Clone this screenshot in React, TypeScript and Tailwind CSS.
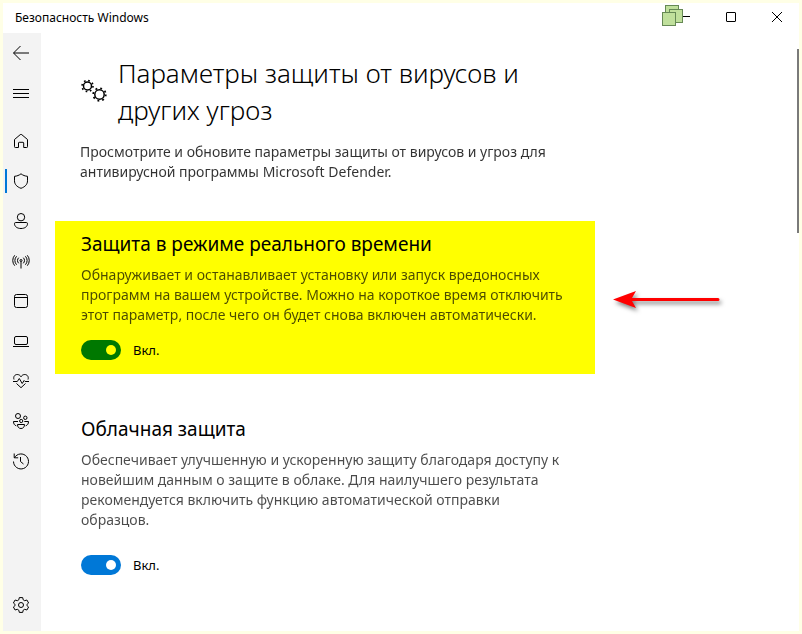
import type { ReactNode } from 'react';

const navItems = [
  {
    label: 'Главная',
    icon: <path d="M1.500 6.500 7.200 1.700a1.200 1.200 0 0 1 1.600 0l5.700 4.800v7.200a.8.8 0 0 1-.8.8h-3V10a.7.7 0 0 0-.7-.7H6.200a.7.7 0 0 0-.7.7v4.500h-3.200a.8.8 0 0 1-.8-.8z" />,
  },
  {
    label: 'Защита от вирусов и угроз',
    active: true,
    icon: <path d="M8 .8c1.900 1.500 4 2.300 6.500 2.500v4.500c0 3.500-2.300 6-6.500 7.500-4.200-1.500-6.500-4-6.500-7.500V3.300C4 3.100 6.100 2.300 8 .8z" />,
  },
  {
    label: 'Защита учетных записей',
    icon: (
      <>
        <circle cx="8" cy="4.200" r="3.700" />
        <path d="M2.700 9.500h10.600a1.200 1.200 0 0 1 1.200 1.200c0 2.800-2.600 4.800-6.500 4.800s-6.500-2-6.500-4.800a1.200 1.200 0 0 1 1.200-1.200z" />
      </>
    ),
  },
  {
    label: 'Брандмауэр и безопасность сети',
    icon: (
      <>
        <circle cx="8" cy="7.500" r="1" />
        <path d="M8 8.500v7M5.700 10.300a3.900 3.900 0 0 1 0-5.600M10.300 10.300a3.900 3.900 0 0 0 0-5.600M3.600 11.700a6 6 0 0 1 0-8.400M12.400 11.700a6 6 0 0 0 0-8.400M1.700 12.700a7.900 7.900 0 0 1 0-10.400M14.300 12.700a7.900 7.900 0 0 0 0-10.400" />
      </>
    ),
  },
  {
    label: 'Управление приложениями и браузером',
    icon: (
      <>
        <rect x="1.500" y="1.500" width="13" height="13" rx="2" />
        <path d="M1.500 4.500h13" />
      </>
    ),
  },
  {
    label: 'Безопасность устройства',
    icon: (
      <>
        <rect x="1.500" y="3.500" width="13" height="8" rx="1.500" />
        <path d="M0 13.500h16" />
      </>
    ),
  },
  {
    label: 'Производительность и работоспособность',
    icon: (
      <>
        <path d="M1 6.500C0 3.500 2 1.500 4.200 1.500c1.600 0 3 .8 3.800 2.300.8-1.500 2.200-2.300 3.800-2.300C14 1.500 16 3.500 15 6.500" />
        <path d="M0 8.500h4.300L6.300 5.500l2.900 5 1.900-3 1 1H16M3.500 10.500 8 14.700l4.500-4.200" />
      </>
    ),
  },
  {
    label: 'Параметры для семьи',
    icon: (
      <>
        <circle cx="5" cy="3" r="2.500" />
        <circle cx="12.300" cy="4.800" r="1.700" />
        <circle cx="8.200" cy="8" r="1.600" />
        <path d="M4.500 11.500h7c0 2.500-1.300 4-3.500 4s-3.500-1.500-3.500-4zM5 8.500H.5c0 2.300 1 3.800 2.800 4.300M11.300 8.500h4.200c0 2.300-1 3.800-2.800 4.300" />
      </>
    ),
  },
  {
    label: 'Журнал защиты',
    icon: <path d="M1.200.5v4.300h4M1.500 4.700A7.500 7.500 0 1 1 .5 8.500M7.500 4v4.500l3 2.500" />,
  },
];

function Icon({ children }: { children: ReactNode }) {
  return (
    <svg viewBox="0 0 16 16" className="size-4 overflow-visible" fill="none" stroke="currentColor" strokeWidth="1" strokeLinejoin="round" aria-hidden="true">
      {children}
    </svg>
  );
}

function NavButton({ label, active, children }: { label: string; active?: boolean; children: ReactNode }) {
  return (
    <button
      type="button"
      aria-label={label}
      className={`flex h-10 w-full items-center justify-center border-x-2 border-transparent pr-0.5 ${active ? 'relative' : ''}`}
    >
      {active && <span className="absolute left-0 h-6 w-0.5 bg-[#0078d7]" />}
      <Icon>{children}</Icon>
    </button>
  );
}

function TitleBar() {
  return (
    <header className="flex h-[30px] items-center justify-between pl-3 text-xs">
      <span>Безопасность Windows</span>
      <div className="relative flex h-7 gap-0.5 self-start">
        <button type="button" aria-label="Свернуть" className="flex w-11 items-center justify-center">
          <svg viewBox="0 0 10 10" className="size-2.5" stroke="currentColor" aria-hidden="true">
            <path d="M0 4.500h10" />
          </svg>
        </button>
        <button type="button" aria-label="Развернуть" className="flex w-11 items-center justify-center">
          <svg viewBox="0 0 10 10" className="size-2.5" fill="none" stroke="currentColor" aria-hidden="true">
            <rect x="0.500" y="0.500" width="9" height="9" rx="0.500" />
          </svg>
        </button>
        <button type="button" aria-label="Закрыть" className="flex w-11 items-center justify-center">
          <svg viewBox="0 0 10 10" className="size-2.5" stroke="currentColor" aria-hidden="true">
            <path d="m0 0 10 10M10 0 0 10" />
          </svg>
        </button>
        {/* Stacked windows badge over the minimize button */}
        <svg viewBox="0 0 21 21" className="absolute top-0.5 -left-px size-[21px]" fill="#c0e09c" stroke="#668955" aria-hidden="true">
          <rect x="3.500" y="0.500" width="13" height="13" />
          <rect x="7.500" y="4.500" width="13" height="13" />
          <rect x="0.500" y="7.500" width="13" height="13" />
        </svg>
      </div>
    </header>
  );
}

function Sidebar() {
  return (
    <nav className="flex w-[38px] shrink-0 flex-col bg-[#f3f3f3] pb-1.5">
      <NavButton label="Назад">
        <path d="M16 8H.7M7.500 1 .5 8l7 7" />
      </NavButton>
      <NavButton label="Открыть навигацию">
        <path d="M0 4.500h16M0 8.500h16M0 12.500h16" />
      </NavButton>
      <div className="mt-2">
        {navItems.map((item) => (
          <NavButton key={item.label} label={item.label} active={item.active}>
            {item.icon}
          </NavButton>
        ))}
      </div>
      <div className="mt-auto">
        <NavButton label="Параметры">
          <circle cx="8" cy="8" r="2.500" />
          <path d="m6.300.6-.5 2.200-1.500.9-2.200-.7L.4 6l1.700 1.500v1L.4 10l1.700 3 2.200-.7 1.500.9.5 2.200h3.400l.5-2.200 1.500-.9 2.200.7 1.700-3-1.700-1.500v-1L15.600 6l-1.700-3-2.200.7-1.500-.9L9.700.6z" />
        </NavButton>
      </div>
    </nav>
  );
}

function Gears() {
  return (
    <svg viewBox="-1 0 26 24" className="h-6 w-[26px] shrink-0 overflow-visible" fill="none" stroke="currentColor" aria-hidden="true">
      <circle cx="6.500" cy="6" r="4" strokeWidth="1.500" />
      <circle cx="6.500" cy="6" r="5.500" strokeWidth="1.600" strokeDasharray="1.700 2.620" />
      <circle cx="18.500" cy="14.500" r="4.700" strokeWidth="1.500" />
      <circle cx="18.500" cy="14.500" r="6.300" strokeWidth="1.700" strokeDasharray="1.900 3.048" />
    </svg>
  );
}

type SettingProps = {
  id: string;
  title: string;
  text: ReactNode;
  className: string;
  switchRow: string;
  switchColor: string;
};

function Setting({ id, title, text, className, switchRow, switchColor }: SettingProps) {
  return (
    <section className={`w-[540px] max-w-full px-[26px] pt-[9px] pb-3.5 ${className}`}>
      <h2 className="text-[19px] leading-7">{title}</h2>
      <p className="mt-[7px] text-sm leading-5 whitespace-nowrap opacity-70">{text}</p>
      <div className={`flex items-center gap-3 ${switchRow}`}>
        <input
          id={id}
          type="checkbox"
          role="switch"
          aria-label={title}
          defaultChecked
          className={`flex h-5 w-10 appearance-none items-center justify-start rounded-full bg-gray-400 px-[5px] before:size-2.5 before:rounded-full checked:justify-end ${switchColor}`}
        />
        <label htmlFor={id} className="text-[13px] leading-5">
          Вкл.
        </label>
      </div>
    </section>
  );
}

export default function App() {
  return (
    <div className="flex min-h-screen flex-col border-3 border-[#ffffe6] bg-white font-['Noto_Sans','Open_Sans',sans-serif] text-black">
      <TitleBar />
      <div className="relative flex grow">
        <Sidebar />
        <main className="min-w-0 grow pt-[22px] pl-3.5">
          <div className="px-[25px]">
            <div className="flex items-center gap-3">
              <Gears />
              <h1 className="text-[26px] leading-[37px] font-light">
                Параметры защиты от вирусов и
                <br />
                других угроз
              </h1>
            </div>
            <p className="mt-[13px] text-sm leading-5 opacity-80">
              Просмотрите и обновите параметры защиты от вирусов и угроз для
              <br />
              антивирусной программы Microsoft Defender.
            </p>
          </div>

          <div className="relative mt-[39px]">
            <Setting
              id="realtime"
              title="Защита в режиме реального времени"
              className="bg-[#ffff00]"
              switchRow="mt-[15px]"
              switchColor="checked:bg-[#007800] before:bg-[#ffff00]"
              text={
                <>
                  Обнаруживает и останавливает установку или запуск вредоносных
                  <br />
                  программ на вашем устройстве. Можно на короткое время отключить
                  <br />
                  этот параметр, после чего он будет снова включен автоматически.
                </>
              }
            />
            {/* Callout arrow pointing at the highlighted setting */}
            <svg viewBox="0 0 112 28" className="absolute top-16 left-[556px] h-7 w-28 overflow-visible drop-shadow-[2px_3px_2px_rgba(0,0,0,0.5)]" fill="#ff0000" aria-hidden="true">
              <path d="M2 14.500 25 6l-4 7h86a1.500 1.500 0 0 1 0 3H21l4 7z" />
            </svg>
          </div>

          <Setting
            id="cloud"
            title="Облачная защита"
            className="mt-8"
            switchRow="mt-[25px]"
            switchColor="checked:bg-[#0078d7] before:bg-white"
            text={
              <>
                Обеспечивает улучшенную и ускоренную защиту благодаря доступу к
                <br />
                новейшим данным о защите в облаке. Для наилучшего результата
                <br />
                рекомендуется включить функцию автоматической отправки
                <br />
                образцов.
              </>
            }
          />
        </main>
        <div className="absolute top-4 right-0 h-[184px] w-0.5 bg-[#7a7a7a]" />
      </div>
    </div>
  );
}
